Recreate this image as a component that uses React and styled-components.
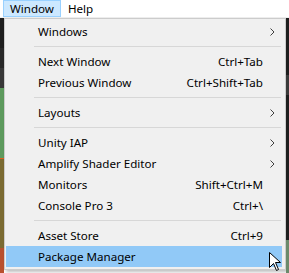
import React from "react";
import styled, { createGlobalStyle } from "styled-components";

const GlobalStyle = createGlobalStyle`
  html, body {
    margin: 0;
    padding: 0;
    background: #ffffff;
    font-family: "Segoe UI", "Noto Sans", "Open Sans", sans-serif;
    font-size: 11.6px;
    color: #000000;
  }
`;

const Page = styled.div`
  width: 289px;
  height: 273px;
  overflow: hidden;
  display: flex;
  flex-direction: column;
  position: relative;
`;

const MenuBar = styled.div`
  height: 17px;
  border-bottom: 1px solid #f0f0f0;
  background: #ffffff;
  display: flex;
  align-items: stretch;
  padding-left: 3px;
`;

const MenuTitle = styled.div`
  display: flex;
  align-items: center;
  box-sizing: border-box;
  padding: 0 ${(p) => (p.$open ? "6px" : "6px")};
  background: ${(p) => (p.$open ? "#cce8ff" : "transparent")};
  border: 1px solid ${(p) => (p.$open ? "#99d1ff" : "transparent")};
  line-height: 1;
`;

const Scene = styled.div`
  flex: 1;
  display: flex;
  align-items: flex-start;
  min-height: 0;
`;

const LeftStrip = styled.div`
  width: 4px;
  align-self: stretch;
  background: linear-gradient(
    to bottom,
    #1e1e1e 0px,
    #1e1e1e 30px,
    #282828 30px,
    #282828 50px,
    #383838 50px,
    #383838 70px,
    #5d9a5d 70px,
    #5d9a5d 140px,
    #e0601e 140px,
    #e0601e 141px,
    #7b6b32 141px,
    #7b6b32 230px,
    #b9502e 230px
  );
`;

const RightStrip = styled.div`
  flex: 1;
  align-self: stretch;
  background: linear-gradient(
    to bottom,
    #1e1e1e 0px,
    #1e1e1e 57px,
    #3a3a3a 57px,
    #3a3a3a 77px,
    #1e1e1e 77px,
    #1e1e1e 222px,
    #6b8a6b 222px
  );
`;

const Popup = styled.div`
  width: 282px;
  box-sizing: border-box;
  background: #f0f0f0;
  border: 1px solid #cccccc;
  padding: 2px 3px 2px 1px;
  box-shadow: 2px 2px 3px rgba(0, 0, 0, 0.25);
  display: flex;
  flex-direction: column;
`;

const Item = styled.div`
  height: 21px;
  display: grid;
  grid-template-columns: 1fr auto 19px;
  align-items: center;
  padding-left: 32px;
  background: ${(p) => (p.$active ? "#91c9f7" : "transparent")};
  white-space: nowrap;
  position: relative;
`;

const Label = styled.span``;

const Shortcut = styled.span`
  text-align: right;
`;

const Arrow = styled.span`
  display: flex;
  align-items: center;
  padding-left: 7px;
`;

const Separator = styled.div`
  height: 1px;
  background: #d7d7d7;
  margin: 4px 1px 4px 28px;
`;

const Cursor = styled.svg`
  position: absolute;
  left: 263px;
  top: 6px;
`;

const Chevron = () => (
  <svg width="5" height="8" viewBox="0 0 5 8">
    <polyline points="0.5,0.5 4,4 0.5,7.5" fill="none" stroke="#404040" strokeWidth="1" />
  </svg>
);

const menu = [
  { label: "Windows", sub: true },
  { sep: true },
  { label: "Next Window", shortcut: "Ctrl+Tab" },
  { label: "Previous Window", shortcut: "Ctrl+Shift+Tab" },
  { sep: true },
  { label: "Layouts", sub: true },
  { sep: true },
  { label: "Unity IAP", sub: true },
  { label: "Amplify Shader Editor", sub: true },
  { label: "Monitors", shortcut: "Shift+Ctrl+M" },
  { label: "Console Pro 3", shortcut: "Ctrl+\\" },
  { sep: true },
  { label: "Asset Store", shortcut: "Ctrl+9" },
  { label: "Package Manager", active: true },
];

export default function App() {
  return (
    <Page>
      <GlobalStyle />
      <MenuBar>
        <MenuTitle $open>Window</MenuTitle>
        <MenuTitle>Help</MenuTitle>
      </MenuBar>
      <Scene>
        <LeftStrip />
        <Popup>
          {menu.map((m, i) =>
            m.sep ? (
              <Separator key={i} />
            ) : (
              <Item key={i} $active={m.active}>
                <Label>{m.label}</Label>
                <Shortcut>{m.shortcut}</Shortcut>
                <Arrow>{m.sub && <Chevron />}</Arrow>
                {m.active && (
                  <Cursor width="13" height="20" viewBox="0 0 13 20">
                    <path
                      d="M0.5 0.5 L0.5 15.5 L4.5 11.5 L7.5 18.5 L9.5 17.5 L6.5 10.5 L11.5 10.5 Z"
                      fill="#ffffff"
                      stroke="#000000"
                      strokeWidth="1"
                      strokeLinejoin="miter"
                    />
                  </Cursor>
                )}
              </Item>
            )
          )}
        </Popup>
        <RightStrip />
      </Scene>
    </Page>
  );
}
